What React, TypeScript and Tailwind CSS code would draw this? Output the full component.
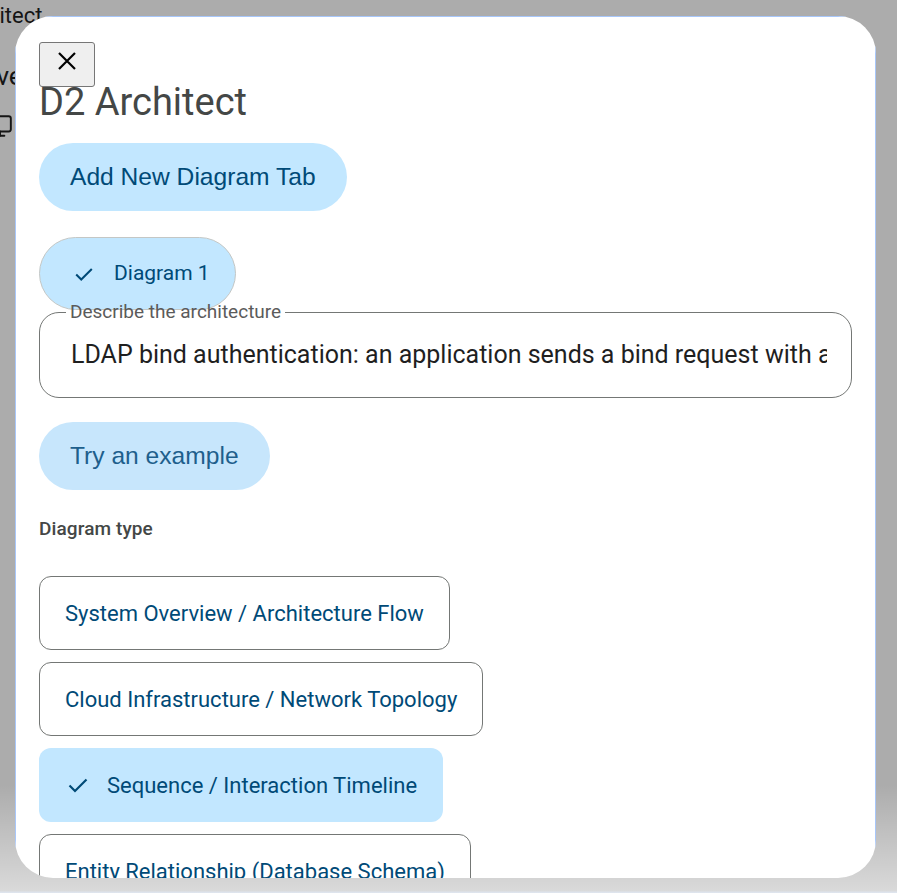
import { Monitor } from "lucide-react";

const options = [
  { label: "System Overview / Architecture Flow", selected: false },
  { label: "Cloud Infrastructure / Network Topology", selected: false },
  { label: "Sequence / Interaction Timeline", selected: true },
  { label: "Entity Relationship (Database Schema)", selected: false },
];

const Check = ({ className }: { className?: string }) => (
  <svg viewBox="0 0 24 24" className={className} fill="none" stroke="currentColor" strokeWidth="2.2">
    <path d="M3.5 12.5l5.5 5.5L20.5 6.5" />
  </svg>
);

const App = () => {
  return (
    <div className="relative h-[893px] w-full overflow-hidden bg-white font-['Roboto',sans-serif] text-[#1f1f1f]">
      {/* page underneath the dialog */}
      <div className="flex flex-col items-start">
        <p className="-ml-[78px] mt-[1px] text-[22px] leading-[30px]">D2 Architect</p>
        <p className="-ml-[33px] mt-[30px] text-[26px] leading-[30px]">Save</p>
        <Monitor className="-ml-[13px] mt-[22px] h-[26px] w-[26px]" strokeWidth={1.8} />
      </div>

      <div className="absolute inset-0 bg-[linear-gradient(to_bottom,rgba(0,0,0,0.325)_88%,rgba(0,0,0,0.15)_99.7%,rgba(220,228,240,0.9)_100%)]" />

      <div className="absolute left-[15px] top-[16px] h-[862px] w-[861px] overflow-hidden rounded-[38px] bg-white">
        <div className="flex min-h-full flex-col items-start border border-[#a8c7fa] px-[23px] pt-[25px]">
          <button className="flex h-[45px] w-[56px] shrink-0 justify-center rounded-[3px] border border-[#767676] bg-[#efefef] pt-[9px]">
            <svg viewBox="0 0 20 18" className="h-[18px] w-[20px]" stroke="#000" strokeWidth="2.2">
              <path d="M2 1l16 16M18 1L2 17" />
            </svg>
          </button>

          <h1 className="-mt-[7px] text-[38px] leading-[44px] text-[#444746]">D2 Architect</h1>

          <button className="mt-[19px] shrink-0 rounded-full bg-[#c2e7ff] px-[31px] py-[20px] font-['Liberation_Sans',sans-serif] text-[24.6px] leading-[28px] text-[#004a77]">
            Add New Diagram Tab
          </button>

          <button className="mt-[26px] flex h-[73px] shrink-0 items-center gap-[19px] rounded-full border border-[#c4c7c5] bg-[#c2e7ff] pl-[33px] pr-[25px] text-[21px] text-[#004a77]">
            <Check className="h-[22px] w-[22px]" />
            Diagram 1
          </button>

          <fieldset className="-mt-[8px] w-full shrink-0 rounded-[20px] border border-[#747775] pb-[27px]">
            <legend className="ml-[26px] px-[4px] text-[19px] leading-[20px] text-[#5b5b5b]">
              Describe the architecture
            </legend>
            <input
              readOnly
              value="LDAP bind authentication: an application sends a bind request with a distinguished name and password to the directory server"
              className="mt-[18px] block h-[30px] w-full bg-transparent pl-[31px] pr-[24px] text-[25px] leading-[30px] text-[#1f1f1f] outline-none"
            />
          </fieldset>

          <button className="mt-[24px] shrink-0 rounded-full bg-[#c7e6fc] px-[31px] py-[20px] font-['Liberation_Sans',sans-serif] text-[24.6px] leading-[28px] text-[#1e5f8c]">
            Try an example
          </button>

          <p className="mt-[27px] text-[19px] font-medium leading-[24px] tracking-[0.1px] text-[#444746]">Diagram type</p>

          <div className="mt-[35px] flex shrink-0 flex-col items-start gap-[12px]">
            {options.map((o) =>
              o.selected ? (
                <button
                  key={o.label}
                  className="flex h-[74px] shrink-0 items-center gap-[17px] rounded-[12px] bg-[#c2e7ff] pl-[27px] pr-[26px] text-[22px] text-[#004a77]"
                >
                  <Check className="h-[24px] w-[24px]" />
                  {o.label}
                </button>
              ) : (
                <button
                  key={o.label}
                  className="flex h-[74px] shrink-0 items-center rounded-[12px] border border-[#747775] px-[25px] text-[22px] text-[#004a77]"
                >
                  {o.label}
                </button>
              )
            )}
          </div>
        </div>
      </div>
    </div>
  );
};

export default App;
